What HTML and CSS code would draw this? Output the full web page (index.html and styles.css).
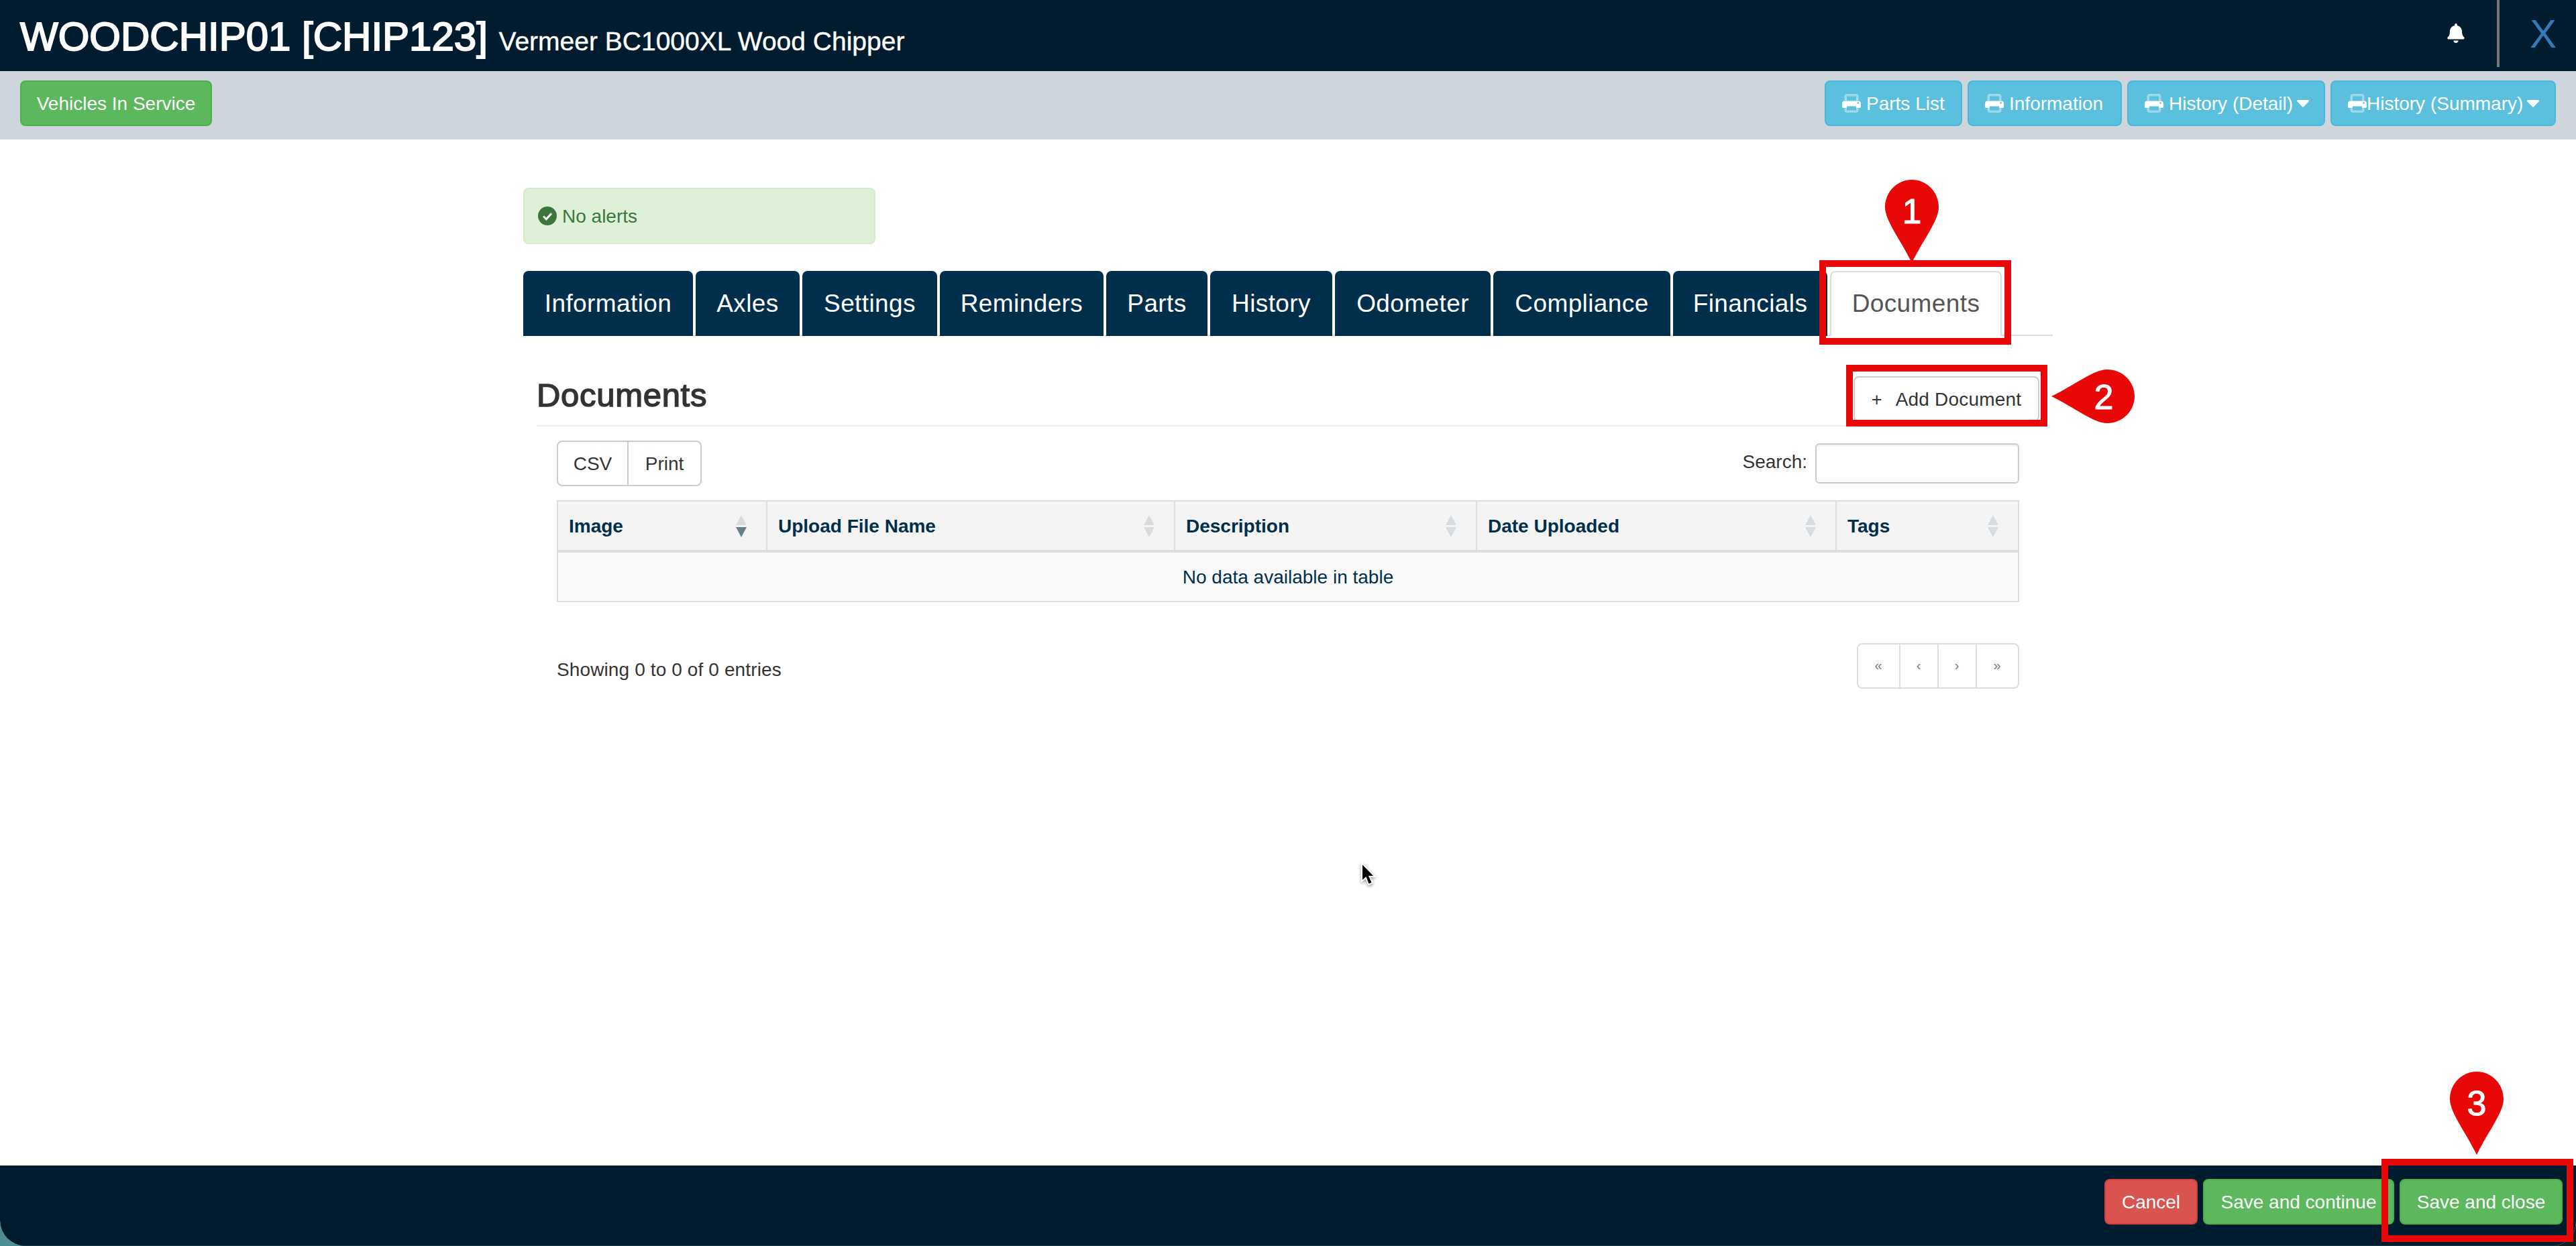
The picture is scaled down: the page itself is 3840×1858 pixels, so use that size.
FILE: index.html
```html
<!DOCTYPE html>
<html lang="en">
<head>
  <meta charset="UTF-8" />
  <title>WOODCHIP01 [CHIP123]</title>
  <link rel="stylesheet" href="styles.css">
</head>
<body>
  <svg class="sprite">
    <symbol id="print" viewBox="0 0 512 512">
      <path opacity=".4" d="M128 64h256v128h64V64c0-35-29-64-64-64H128C93 0 64 29 64 64v128h64zM64 384v64c0 35 29 64 64 64h256c35 0 64-29 64-64v-64h-64v64H128v-64z"/>
      <path d="M448 192H64c-35 0-64 29-64 64v96c0 18 14 32 32 32h96v-48h256v48h96c18 0 32-14 32-32v-96c0-35-29-64-64-64zm-16 80a24 24 0 1 1 0-48 24 24 0 0 1 0 48z"/>
    </symbol>
    <symbol id="pin" viewBox="0 0 80 124">
      <path d="M40 0C62 0 80 18 80 41C80 61 57 89 40 124C23 89 0 61 0 41C0 18 18 0 40 0z"/>
    </symbol>
    <symbol id="caret" viewBox="0 0 18 11">
      <path d="M1.500 0h15c1.300 0 2 1.500 1 2.500L10 10.300c-.6.600-1.500.600-2 0L.5 2.500C-.5 1.500.2 0 1.500 0z"/>
    </symbol>
  </svg>

  <div class="page">
    <header class="titlebar">
      <h1>WOODCHIP01 [CHIP123] <small>Vermeer BC1000XL Wood Chipper</small></h1>
      <svg class="bell" viewBox="0 0 448 512"><path d="M224 512c35.3 0 64-28.7 64-64H160c0 35.300 28.700 64 64 64zm215.400-149.700c-19.300-20.800-55.500-52-55.500-154.300 0-77.700-54.500-139.900-127.900-155.200V32c0-17.700-14.300-32-32-32s-32 14.300-32 32v20.800C118.600 68.100 64.100 130.300 64.100 208c0 102.300-36.200 133.500-55.500 154.300-6 6.500-8.700 14.200-8.600 21.700.1 16.400 13 32 32.100 32h383.800c19.100 0 32-15.600 32.100-32 .1-7.500-2.600-15.300-8.600-21.700z"/></svg>
      <a class="close">X</a>
    </header>

    <nav class="actions">
      <button class="btn btn-success in-service">Vehicles In Service</button>
      <div class="reports">
        <button class="btn btn-info parts-list"><svg class="icon"><use href="#print"/></svg><span>Parts List</span></button>
        <button class="btn btn-info info"><svg class="icon"><use href="#print"/></svg><span>Information</span></button>
        <button class="btn btn-info detail"><svg class="icon"><use href="#print"/></svg><span>History (Detail)</span><svg class="caret"><use href="#caret"/></svg></button>
        <button class="btn btn-info summary"><svg class="icon"><use href="#print"/></svg><span>History (Summary)</span><svg class="caret"><use href="#caret"/></svg></button>
      </div>
    </nav>

    <main class="content">
      <div class="alert">
        <svg class="check" viewBox="0 0 28 28"><circle cx="14" cy="14" r="14"/><path d="M8 14.500l4.300 4.300 7.800-8.600"/></svg>
        <span>No alerts</span>
      </div>

      <ul class="tabs">
        <li class="w-information">Information</li>
        <li class="w-axles">Axles</li>
        <li class="w-settings">Settings</li>
        <li class="w-reminders">Reminders</li>
        <li class="w-parts">Parts</li>
        <li class="w-history">History</li>
        <li class="w-odometer">Odometer</li>
        <li class="w-compliance">Compliance</li>
        <li class="w-financials">Financials</li>
        <li class="w-documents active">Documents</li>
      </ul>

      <section class="panel">
        <div class="panel-head">
          <h2>Documents</h2>
          <button class="btn btn-default add"><span class="plus">+</span><span>Add Document</span></button>
        </div>

        <div class="table-wrap">
          <div class="toolbar">
            <div class="export">
              <button class="csv">CSV</button>
              <button class="print">Print</button>
            </div>
            <label class="search"><span>Search:</span><input type="text"></label>
          </div>

          <table>
            <colgroup>
              <col class="c-image"><col class="c-file"><col class="c-desc"><col class="c-date"><col class="c-tags">
            </colgroup>
            <thead>
              <tr>
                <th><div class="th sorted">Image<i class="sort"></i></div></th>
                <th><div class="th">Upload File Name<i class="sort"></i></div></th>
                <th><div class="th">Description<i class="sort"></i></div></th>
                <th><div class="th">Date Uploaded<i class="sort"></i></div></th>
                <th><div class="th">Tags<i class="sort"></i></div></th>
              </tr>
            </thead>
            <tbody>
              <tr><td colspan="5">No data available in table</td></tr>
            </tbody>
          </table>

          <div class="table-foot">
            <span class="count">Showing 0 to 0 of 0 entries</span>
            <div class="pager"><a class="first">«</a><a>‹</a><a>›</a><a class="last">»</a></div>
          </div>
        </div>
      </section>
    </main>

    <footer class="savebar">
      <button class="btn btn-danger cancel">Cancel</button>
      <button class="btn btn-success save-continue">Save and continue</button>
      <button class="btn btn-success save-close">Save and close</button>
    </footer>
  </div>

  <!-- step callouts -->
  <div class="box box-1"></div>
  <div class="box box-2"></div>
  <div class="box box-3"></div>
  <div class="pin pin-1"><svg><use href="#pin"/></svg><b>1</b></div>
  <div class="pin pin-2"><svg><use href="#pin"/></svg><b>2</b></div>
  <div class="pin pin-3"><svg><use href="#pin"/></svg><b>3</b></div>

  <svg class="cursor" viewBox="0 0 26 40"><path d="M4 3v27l6-5 4 10 6-2.500-4.500-9.500h8z"/></svg>
</body>
</html>
```
FILE: styles.css
```css
* {
  box-sizing: border-box;
}
body {
  margin: 0;
  background: linear-gradient(90deg, #4d8f90 50%, #14201f 50%);
  color: #333;
  font-family: "Liberation Sans", Arial, sans-serif;
  font-size: 28px;
  line-height: 40px;
  overflow: hidden;
}
.sprite {
  display: none;
}
.page {
  display: flex;
  flex-direction: column;
  height: 1858px;
  background: #fff;
  border-radius: 0 0 36px 38px;
  overflow: hidden;
}
h1, h2, ul {
  margin: 0;
  padding: 0;
}

/* header */
.titlebar {
  display: flex;
  height: 106px;
  padding-left: 30px;
  background: #001c2e;
  color: #fff;
}
h1 {
  flex: 1;
  padding-top: 22px;
  font-size: 60px;
  line-height: 66px;
  font-weight: normal;
  -webkit-text-stroke: 2px #fff;
  white-space: nowrap;
}
h1 small {
  font-size: 39px;
  -webkit-text-stroke: 0.400px #fff;
}
.bell {
  width: 26px;
  height: 29px;
  margin: 35px 48px 0 0;
  fill: #fff;
}
.close {
  width: 118px;
  height: 100px;
  padding-left: 45px;
  border-left: 4px solid #777;
  color: #337ab7;
  font-size: 60px;
  line-height: 102px;
}

/* buttons */
.btn {
  display: flex;
  align-items: center;
  justify-content: center;
  height: 68px;
  padding: 2px 0 0;
  border: 2px solid #ccc;
  border-radius: 8px;
  background: #fff;
  color: #333;
  font: inherit;
  white-space: nowrap;
}
.btn-success {
  background: #5cb85c;
  border-color: #4cae4c;
  color: #fff;
}
.btn-danger {
  background: #d9534f;
  border-color: #d43f3a;
  color: #fff;
}
.btn-info {
  justify-content: flex-start;
  padding-left: 24px;
  background: #5bc0de;
  border-color: #46b8da;
  color: #fff;
}
.actions {
  display: flex;
  justify-content: space-between;
  height: 102px;
  padding: 14px 30px 0;
  background: #ced5dd;
}
.reports {
  display: flex;
  gap: 8px;
}
.icon {
  width: 28px;
  height: 28px;
  margin: 0 8px 2px 0;
  fill: #fff;
}
.caret {
  width: 18px;
  height: 11px;
  margin: 0 0 1px 6px;
  fill: #fff;
}
.in-service { width: 286px; }
.parts-list { width: 205px; }
.info { width: 230px; }
.detail { width: 295px; }
.summary { width: 336px; }
.summary .icon { margin-right: 0; }

/* content */
.content {
  flex: 1;
  width: 2280px;
  margin-left: 780px;
  padding-top: 72px;
}
.alert {
  display: flex;
  align-items: center;
  width: 525px;
  height: 84px;
  padding-left: 20px;
  border: 2px solid #d6e9c6;
  border-radius: 8px;
  background: #dff0d8;
  color: #3c763d;
}
.alert span {
  padding-top: 1px;
}
.check {
  width: 28px;
  height: 28px;
  margin-right: 8px;
  fill: #3c763d;
}
.check path {
  fill: none;
  stroke: #fff;
  stroke-width: 3;
}
.tabs {
  display: flex;
  gap: 4px;
  height: 97px;
  margin-top: 40px;
  border-bottom: 2px solid #ddd;
  list-style: none;
  font-size: 37px;
  letter-spacing: 0.400px;
}
.tabs li {
  height: 97px;
  border-radius: 8px 8px 0 0;
  background: #002f4b;
  color: #fff;
  line-height: 98px;
  text-align: center;
}
.tabs .active {
  border: 2px solid #ddd;
  border-bottom: 0;
  background: #fff;
  color: #555;
  line-height: 94px;
}
.w-information { width: 253px; }
.w-axles { width: 155px; }
.w-settings { width: 201px; }
.w-reminders { width: 244px; }
.w-parts { width: 151px; }
.w-history { width: 182px; }
.w-odometer { width: 232px; }
.w-compliance { width: 264px; }
.w-financials { width: 230px; }
.w-documents { width: 256px; }

.panel {
  padding: 60px 20px 0;
}
.panel-head {
  display: flex;
  justify-content: space-between;
  height: 75px;
  border-bottom: 2px solid #eee;
}
h2 {
  padding-top: 1px;
  font-size: 49px;
  line-height: 54px;
  font-weight: normal;
  letter-spacing: 0.700px;
  -webkit-text-stroke: 1.500px #333;
}
.add {
  width: 277px;
  letter-spacing: 0.200px;
}
.plus {
  margin-right: 20px;
  font-size: 27px;
}
.table-wrap {
  padding: 21px 30px 0;
}
.toolbar {
  display: flex;
  justify-content: space-between;
  height: 89px;
}
.export {
  display: flex;
  width: 216px;
  height: 68px;
  border: 2px solid #ccc;
  border-radius: 8px;
}
.export button {
  flex: 1;
  padding: 1px 0 0;
  border: 0;
  background: none;
  color: #333;
  font: inherit;
}
.export .csv {
  flex: 0 0 105px;
  border-right: 2px solid #ccc;
}
.search {
  display: flex;
  gap: 12px;
  padding-top: 4px;
}
.search span {
  padding-top: 8px;
}
.search input {
  width: 304px;
  height: 60px;
  border: 2px solid #ccc;
  border-radius: 6px;
  box-shadow: inset 0 2px 2px rgba(0,0,0,0.075);
}

table {
  width: 2180px;
  table-layout: fixed;
  border-collapse: separate;
  border-spacing: 0;
  border: 2px solid #ddd;
  color: #002f4b;
}
.c-image { width: 312px; }
.c-file { width: 608px; }
.c-desc { width: 450px; }
.c-date { width: 536px; }
.c-tags { width: 270px; }
th {
  height: 76px;
  padding: 0;
  background: #f4f4f4;
  border-right: 2px solid #ddd;
  border-bottom: 4px solid #ddd;
}
th:last-child {
  border-right: 0;
}
.th {
  display: flex;
  align-items: center;
  justify-content: space-between;
  height: 72px;
  padding: 1px 29px 0 16px;
}
/* two stacked triangles */
.sort {
  display: flex;
  flex-direction: column;
  gap: 3px;
}
.sort::before, .sort::after {
  content: "";
  border-left: 8px solid transparent;
  border-right: 8px solid transparent;
}
.sort::before {
  border-bottom: 15px solid #d6dcdf;
}
.sort::after {
  border-top: 15px solid #d6dcdf;
}
.sorted .sort::after {
  border-top-color: #667f8d;
}
td {
  height: 72px;
  padding: 1px 0 0;
  background: #f9f9f9;
  text-align: center;
}
.table-foot {
  display: flex;
  justify-content: space-between;
  padding-top: 61px;
}
.count {
  padding-top: 20px;
  letter-spacing: 0.120px;
}
.pager {
  display: flex;
  height: 68px;
  border: 2px solid #ddd;
  border-radius: 8px;
}
.pager a {
  width: 57px;
  padding-right: 1px;
  border-right: 2px solid #ddd;
  color: #777;
  font-size: 20px;
  line-height: 63px;
  text-align: center;
}
.pager .first {
  width: 63px;
}
.pager .last {
  width: 61px;
  border: 0;
}

/* bottom bar */
.savebar {
  display: flex;
  justify-content: flex-end;
  gap: 8px;
  height: 120px;
  padding: 20px 20px 0 0;
  background: #001c2e;
  border-bottom: 1px solid #1d3d4a;
}
.cancel { width: 139px; }
.save-continue { width: 285px; }
.save-close { width: 243px; }

/* callouts */
.box {
  position: absolute;
  border: 10px solid #e90808;
}
.box-1 {
  left: 2712px;
  top: 388px;
  width: 286px;
  height: 126px;
}
.box-2 {
  left: 2752px;
  top: 544px;
  width: 300px;
  height: 92px;
}
.box-3 {
  left: 3550px;
  top: 1728px;
  width: 286px;
  height: 124px;
}
.pin {
  position: absolute;
  width: 80px;
  height: 124px;
}
.pin svg {
  display: block;
  width: 80px;
  height: 124px;
  fill: #e90808;
}
.pin b {
  position: absolute;
  left: 0;
  top: 17px;
  width: 80px;
  color: #fff;
  font-size: 52px;
  font-weight: normal;
  line-height: 60px;
  text-align: center;
  -webkit-text-stroke: 1px #fff;
}
.pin-1 {
  left: 2810px;
  top: 268px;
}
.pin-2 {
  left: 3080px;
  top: 529px;
}
.pin-2 svg {
  transform: rotate(90deg);
}
.pin-2 b {
  left: 16px;
  top: 33px;
}
.pin-3 {
  left: 3652px;
  top: 1598px;
}
.cursor {
  position: absolute;
  left: 2026px;
  top: 1284px;
  width: 26px;
  height: 40px;
  fill: #000;
  stroke: #fff;
  stroke-width: 2;
  filter: drop-shadow(0 2px 2px rgba(0,0,0,0.4));
}
```
